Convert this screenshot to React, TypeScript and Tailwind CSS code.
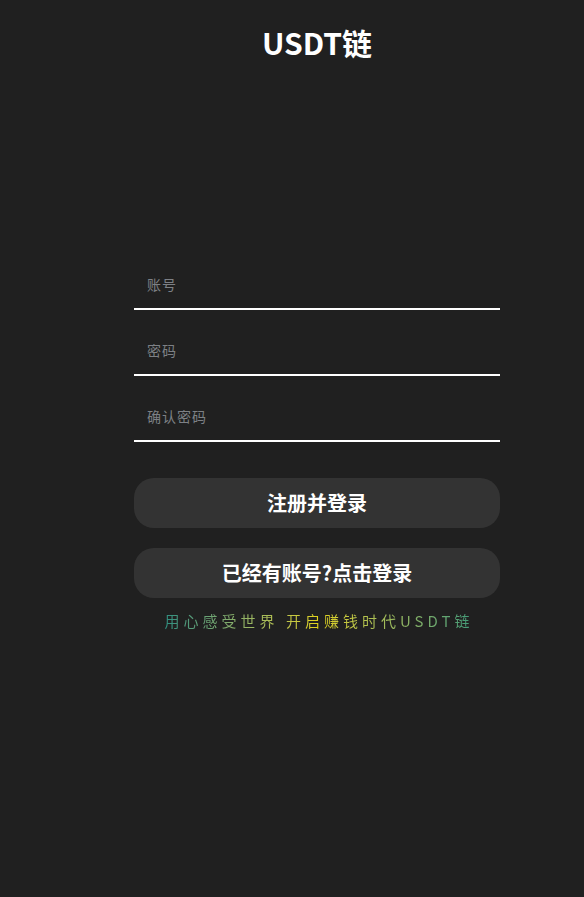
export default function App() {
  return (
    <div
      className="min-h-[897px] w-full bg-[#202020]"
      style={{ fontFamily: '"Noto Sans CJK SC", "Noto Sans", sans-serif' }}
    >
      <div className="ml-[134px] w-[366px]">
        <h1 className="pt-[22px] text-center text-[30px] leading-[40px] font-bold text-white">USDT链</h1>

        <div className="mt-[198px] flex flex-col gap-4">
          <input
            className="h-[50px] w-full border-b-2 border-white bg-transparent px-[13px] text-[14px] tracking-[1px] text-white outline-none placeholder:text-[#7d8085]"
            placeholder="账号"
          />
          <input
            type="password"
            className="h-[50px] w-full border-b-2 border-white bg-transparent px-[13px] text-[14px] tracking-[1px] text-white outline-none placeholder:text-[#7d8085]"
            placeholder="密码"
          />
          <input
            type="password"
            className="h-[50px] w-full border-b-2 border-white bg-transparent px-[13px] text-[14px] tracking-[1px] text-white outline-none placeholder:text-[#7d8085]"
            placeholder="确认密码"
          />
        </div>

        <button className="mt-[36px] flex h-[50px] w-full items-center justify-center rounded-[20px] bg-[#333333] text-[20px] font-bold text-white">
          注册并登录
        </button>
        <button className="mt-[20px] flex h-[50px] w-full items-center justify-center rounded-[20px] bg-[#333333] text-[20px] font-bold text-white">
          已经有账号?点击登录
        </button>

        <p className="mt-[13px] pl-[4px] text-center text-[15px] leading-[20px] tracking-[4px]">
          <span className="bg-gradient-to-r from-[#2f8f80] via-[#e0d214] to-[#3f9a78] bg-clip-text text-transparent">
            用心感受世界 开启赚钱时代USDT链
          </span>
        </p>
      </div>
    </div>
  );
}
